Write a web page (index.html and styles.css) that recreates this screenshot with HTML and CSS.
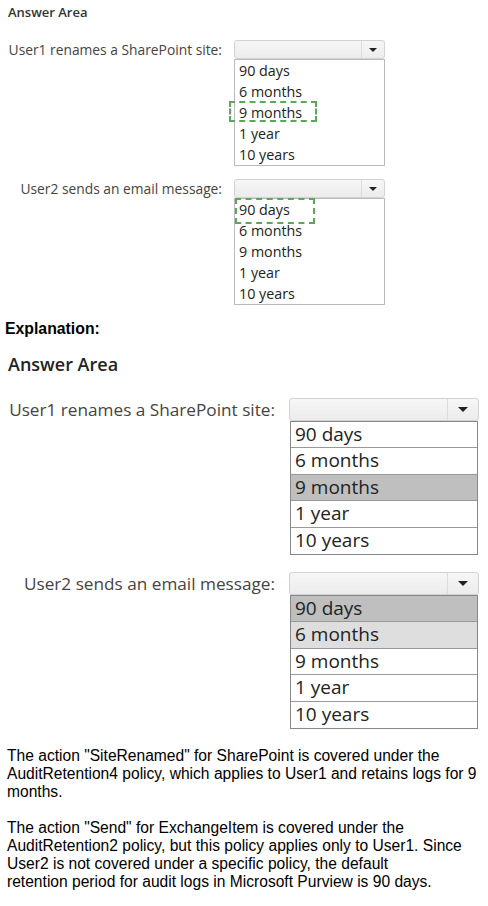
FILE: index.html
```html
<!DOCTYPE html>
<html lang="en">
<head>
    <meta charset="UTF-8">
    <title>Answer Area</title>
    <link rel="stylesheet" href="styles.css">
</head>
<body>
    <!-- question as shown -->
    <section class="area area-small">
        <h2 class="area-title">Answer Area</h2>
        <div class="question">
            <span class="q-label">User1 renames a SharePoint site:</span>
            <div class="picker">
                <div class="dropdown"><span class="arrow"></span></div>
                <ul class="options">
                    <li>90 days</li>
                    <li>6 months</li>
                    <li class="marked">9 months</li>
                    <li>1 year</li>
                    <li>10 years</li>
                </ul>
                <div class="dash dash-one"></div>
            </div>
        </div>
        <div class="question">
            <span class="q-label">User2 sends an email message:</span>
            <div class="picker">
                <div class="dropdown"><span class="arrow"></span></div>
                <ul class="options">
                    <li>90 days</li>
                    <li>6 months</li>
                    <li>9 months</li>
                    <li>1 year</li>
                    <li>10 years</li>
                </ul>
                <div class="dash dash-two"></div>
            </div>
        </div>
    </section>

    <h3 class="explain">Explanation:</h3>

    <!-- answer -->
    <section class="area area-big">
        <h2 class="area-title">Answer Area</h2>
        <div class="question">
            <span class="q-label">User1 renames a SharePoint site:</span>
            <div class="picker">
                <div class="dropdown"><span class="arrow"></span></div>
                <ul class="options">
                    <li>90 days</li>
                    <li>6 months</li>
                    <li class="picked">9 months</li>
                    <li>1 year</li>
                    <li>10 years</li>
                </ul>
            </div>
        </div>
        <div class="question">
            <span class="q-label">User2 sends an email message:</span>
            <div class="picker">
                <div class="dropdown"><span class="arrow"></span></div>
                <ul class="options">
                    <li class="picked">90 days</li>
                    <li class="hover">6 months</li>
                    <li>9 months</li>
                    <li>1 year</li>
                    <li>10 years</li>
                </ul>
            </div>
        </div>
    </section>

    <div class="notes">
        <p>The action "SiteRenamed" for SharePoint is covered under the<br>
        AuditRetention4 policy, which applies to User1 and retains logs for 9<br>
        months.</p>
        <p>The action "Send" for ExchangeItem is covered under the<br>
        AuditRetention2 policy, but this policy applies only to User1. Since<br>
        User2 is not covered under a specific policy, the default<br>
        retention period for audit logs in Microsoft Purview is 90 days.</p>
    </div>
</body>
</html>
```

FILE: styles.css
```css
body {
    margin: 0;
    background: #fff;
    font-family: "Open Sans", "Noto Sans", sans-serif;
}

.area {
    color: #222;
}

.area-title {
    margin: 0;
    padding-left: 8px;
    font-weight: 600;
}

.question {
    display: flex;
    align-items: flex-start;
}

.q-label {
    text-align: right;
    color: #444;
}

.picker {
    position: relative;
}

.dropdown {
    display: flex;
    justify-content: flex-end;
    box-sizing: border-box;
    border: 1px solid #d2d2d2;
    border-radius: 3px;
    background: linear-gradient(#f6f6f6, #ececec);
}

.arrow {
    display: flex;
    align-items: center;
    justify-content: center;
    border-left: 1px solid #dcdcdc;
}

.arrow::after {
    content: "";
    border-left: 5px solid transparent;
    border-right: 5px solid transparent;
    border-top: 5px solid #222;
}

.options {
    list-style: none;
    margin: 0;
    padding: 0;
    border: 1px solid #aaa;
    background: #fff;
    color: #222;
}

/* small (question) version */
.area-small .area-title {
    padding-top: 4px;
    font-size: 13px;
    line-height: 16px;
    color: #333;
}

.area-small .question {
    margin-top: 20px;
    column-gap: 12px;
}

.area-small .question + .question {
    margin-top: 13px;
}

.area-small .q-label {
    width: 222px;
    font-size: 13.8px;
    line-height: 19px;
}

.area-small .picker {
    width: 151px;
}

.area-small .dropdown {
    height: 19px;
}

.area-small .arrow {
    width: 22px;
}

.area-small .arrow::after {
    border-left-width: 4px;
    border-right-width: 4px;
    border-top-width: 4px;
}

.area-small .options {
    border-color: #bbb;
}

.area-small .options li {
    height: 21px;
    padding-left: 4px;
    font-size: 14.3px;
    line-height: 21px;
}

.dash {
    position: absolute;
    border: 2px dashed #5aa85a;
}

.dash-one {
    left: -5px;
    top: 61px;
    width: 84px;
    height: 17px;
}

.dash-two {
    left: 1px;
    top: 19px;
    width: 76px;
    height: 22px;
}

.explain {
    margin: 15px 0 0 5px;
    font-family: "Liberation Sans", Arial, sans-serif;
    font-size: 15.8px;
    line-height: 17px;
    color: #000;
}

/* big (answer) version */
.area-big .area-title {
    margin-top: 16px;
    font-size: 18px;
    line-height: 22px;
}

.area-big .question {
    margin-top: 23px;
    column-gap: 14px;
}

.area-big .question + .question {
    margin-top: 17px;
}

.area-big .q-label {
    width: 275px;
    font-size: 17.2px;
    line-height: 23px;
}

.area-big .picker {
    width: 190px;
}

.area-big .dropdown {
    height: 23px;
}

.area-big .arrow {
    width: 30px;
}

.area-big .options {
    margin-left: 1px;
    margin-right: 1px;
    border-color: #888;
}

.area-big .options li {
    box-sizing: border-box;
    height: 26.4px;
    padding-left: 4px;
    border-bottom: 1px solid #999;
    font-size: 19px;
    line-height: 25px;
}

.area-big .options li:last-child {
    border-bottom: 0;
}

.area-big .options .picked {
    background: #bfbfbf;
}

.area-big .options .hover {
    background: #dedede;
}

.notes {
    margin-top: 18px;
    padding-left: 7px;
    font-family: "Liberation Sans", Arial, sans-serif;
    font-size: 15.6px;
    line-height: 18px;
    color: #000;
    white-space: nowrap;
}

.notes p {
    margin: 0 0 18px;
}
```
